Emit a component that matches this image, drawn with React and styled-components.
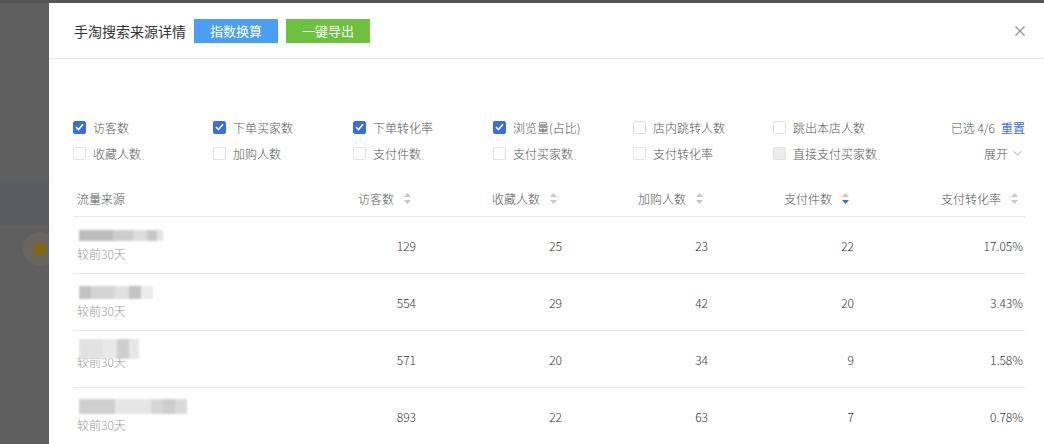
import styled, { createGlobalStyle } from "styled-components";
import { ChevronDown } from "lucide-react";

const GlobalStyle = createGlobalStyle`
  * { box-sizing: border-box; }
  body {
    margin: 0;
    background: #5e5e5e;
    font-family: "Microsoft YaHei", "Noto Sans CJK SC", "Noto Sans", sans-serif;
    font-weight: 300;
  }
`;

const Page = styled.div`
  position: relative;
  width: 1044px;
  height: 444px;
  overflow: hidden;
  background: #5f5f5f;
  border-top: 3px solid #555;
`;

const Behind = styled.div`
  width: 49px;
  padding-top: 179px;
  display: flex;
  flex-direction: column;
`;

const Band = styled.div`
  height: 43px;
  background: #5a5c61;
`;

const Halo = styled.div`
  margin: 7px 0 0 23px;
  width: 34px;
  height: 34px;
  border-radius: 50%;
  background: radial-gradient(circle, #86660a 0 6px, #6a6559 7px, #666 17px);
`;

const Modal = styled.div`
  position: absolute;
  left: 49px;
  top: 0;
  width: 1000px;
  height: 460px;
  background: #fff;
`;

const Header = styled.div`
  height: 56px;
  padding: 0 24px 0 25px;
  display: flex;
  align-items: center;
  border-bottom: 1px solid #e6e6e6;
`;

const Title = styled.h3`
  margin: 0 8px 0 0;
  font-size: 14px;
  font-weight: 400;
  color: #333;
`;

const ActionButton = styled.button`
  width: 84px;
  height: 24px;
  margin-right: 8px;
  border: none;
  padding: 0;
  font-family: inherit;
  font-weight: 400;
  font-size: 13px;
  color: #fff;
  background: ${(p) => (p.$green ? "#6cc13f" : "#4a9ff5")};
`;

const Close = styled.button`
  margin-left: auto;
  margin-right: -1px;
  border: none;
  background: none;
  padding: 0;
  width: 12px;
  height: 12px;
  display: flex;
`;

const Body = styled.div`
  padding: 55px 24px 0;
`;

const Filters = styled.div`
  display: flex;
`;

const Options = styled.div`
  display: grid;
  grid-template-columns: repeat(6, 140px);
  grid-auto-rows: 26px;
`;

const Option = styled.label`
  display: flex;
  align-items: center;
  font-size: 12px;
  color: #555;
`;

const Box = styled.span`
  width: 13px;
  height: 13px;
  margin-right: 7px;
  border-radius: 2px;
  border: 1px solid ${(p) => (p.$checked ? "#3a6fd8" : "#e2e2e2")};
  background: ${(p) => (p.$checked ? "#3a6fd8" : p.$disabled ? "#ececec" : "#fff")};
  display: flex;
  align-items: center;
  justify-content: center;
`;

const Side = styled.div`
  flex: 1;
  display: grid;
  grid-auto-rows: 26px;
  justify-items: end;
  align-items: center;
  font-size: 12px;
  color: #555;
`;

const Link = styled.span`
  color: #3a6fd8;
  font-weight: 400;
  margin-left: 6px;
`;

const Expand = styled.span`
  display: flex;
  align-items: center;
  gap: 3px;
  margin-right: 1px;
`;

const Table = styled.div`
  margin-top: 15px;
`;

const Row = styled.div`
  display: grid;
  grid-template-columns: 199px 146px 146px 146px 146px 169px;
  height: ${(p) => (p.$head ? "36px" : "57px")};
  border-bottom: 1px solid #e8e8e8;
  align-items: center;
  font-size: 12px;
  color: ${(p) => (p.$head ? "#555" : "#333")};
`;

const HeadCell = styled.div`
  display: flex;
  align-items: center;
  justify-content: ${(p) => (p.$left ? "flex-start" : "flex-end")};
  padding: ${(p) => (p.$left ? "0 0 0 4px" : "0 7px 0 0")};
`;

const Cell = styled.div`
  text-align: right;
  padding-right: 2px;
`;

const Source = styled.div`
  padding: 11px 0 0 4px;
  align-self: start;
  display: flex;
  flex-direction: column;
`;

const Blur = styled.div`
  display: flex;
  height: ${(p) => p.$h}px;
  margin-top: ${(p) => p.$top}px;
  filter: blur(1.2px);
  margin-left: 2px;
`;

const Piece = styled.span`
  display: block;
  width: ${(p) => p.$w}px;
  background: ${(p) => p.$c};
`;

const Compare = styled.span`
  color: #999;
  font-size: 12px;
  margin-top: ${(p) => p.$gap}px;
`;

const SortIcon = ({ active }) => (
  <svg width="7" height="11" viewBox="0 0 7 11" style={{ marginLeft: 10 }}>
    <path d="M3.5 0 L7 4 H0 Z" fill="#c4c7cc" />
    <path d="M3.5 11 L7 7 H0 Z" fill={active ? "#3a6fd8" : "#c4c7cc"} />
  </svg>
);

const Check = () => (
  <svg width="9" height="8" viewBox="0 0 9 8">
    <path d="M1 4 L3.5 6.5 L8 1.2" stroke="#fff" strokeWidth="1.6" fill="none" />
  </svg>
);

const options = [
  ["访客数", true],
  ["下单买家数", true],
  ["下单转化率", true],
  ["浏览量(占比)", true],
  ["店内跳转人数", false],
  ["跳出本店人数", false],
  ["收藏人数", false],
  ["加购人数", false],
  ["支付件数", false],
  ["支付买家数", false],
  ["支付转化率", false],
  ["直接支付买家数", false, true],
];

const columns = ["访客数", "收藏人数", "加购人数", "支付件数", "支付转化率"];

const rows = [
  {
    blur: { h: 11, top: 2, gap: 4, pieces: [[34, "#bdbdbd"], [20, "#cdcdcd"], [14, "#dcdcdc"], [10, "#c8c8c8"], [6, "#e4e4e4"]] },
    values: ["129", "25", "23", "22", "17.05%"],
  },
  {
    blur: { h: 13, top: 1, gap: 3, pieces: [[12, "#c2c2c2"], [24, "#d4d4d4"], [14, "#e0e0e0"], [12, "#c4c4c4"], [12, "#ececec"]] },
    values: ["554", "29", "42", "20", "3.43%"],
  },
  {
    blur: { h: 20, top: -3, gap: -6, pieces: [[24, "#e2e2e2"], [14, "#e8e8e8"], [12, "#cfcfcf"], [10, "#e6e6e6"]] },
    values: ["571", "20", "34", "9", "1.58%"],
  },
  {
    blur: { h: 15, top: 0, gap: 2, pieces: [[36, "#cfcfcf"], [36, "#e6e6e6"], [12, "#d6d6d6"], [12, "#cdcdcd"], [12, "#dadada"]] },
    values: ["893", "22", "63", "7", "0.78%"],
  },
];

export default function App() {
  return (
    <>
      <GlobalStyle />
      <Page>
        <Behind>
          <Band />
          <Halo />
        </Behind>
        <Modal>
          <Header>
            <Title>手淘搜索来源详情</Title>
            <ActionButton>指数换算</ActionButton>
            <ActionButton $green>一键导出</ActionButton>
            <Close>
              <svg width="12" height="12" viewBox="0 0 12 12">
                <path d="M1.5 1.5 L10.5 10.5 M10.5 1.5 L1.5 10.5" stroke="#999" strokeWidth="1.4" />
              </svg>
            </Close>
          </Header>
          <Body>
            <Filters>
              <Options>
                {options.map(([label, checked, disabled]) => (
                  <Option key={label}>
                    <Box $checked={checked} $disabled={disabled}>
                      {checked && <Check />}
                    </Box>
                    {label}
                  </Option>
                ))}
              </Options>
              <Side>
                <span>
                  已选 4/6<Link>重置</Link>
                </span>
                <Expand>
                  展开 <ChevronDown size={13} color="#888" strokeWidth={1.5} />
                </Expand>
              </Side>
            </Filters>
            <Table>
              <Row $head>
                <HeadCell $left>流量来源</HeadCell>
                {columns.map((c) => (
                  <HeadCell key={c}>
                    {c}
                    <SortIcon active={c === "支付件数"} />
                  </HeadCell>
                ))}
              </Row>
              {rows.map((r, i) => (
                <Row key={i}>
                  <Source>
                    <Blur $h={r.blur.h} $top={r.blur.top}>
                      {r.blur.pieces.map(([w, c], j) => (
                        <Piece key={j} $w={w} $c={c} />
                      ))}
                    </Blur>
                    <Compare $gap={r.blur.gap}>较前30天</Compare>
                  </Source>
                  {r.values.map((v, j) => (
                    <Cell key={j}>{v}</Cell>
                  ))}
                </Row>
              ))}
            </Table>
          </Body>
        </Modal>
      </Page>
    </>
  );
}
